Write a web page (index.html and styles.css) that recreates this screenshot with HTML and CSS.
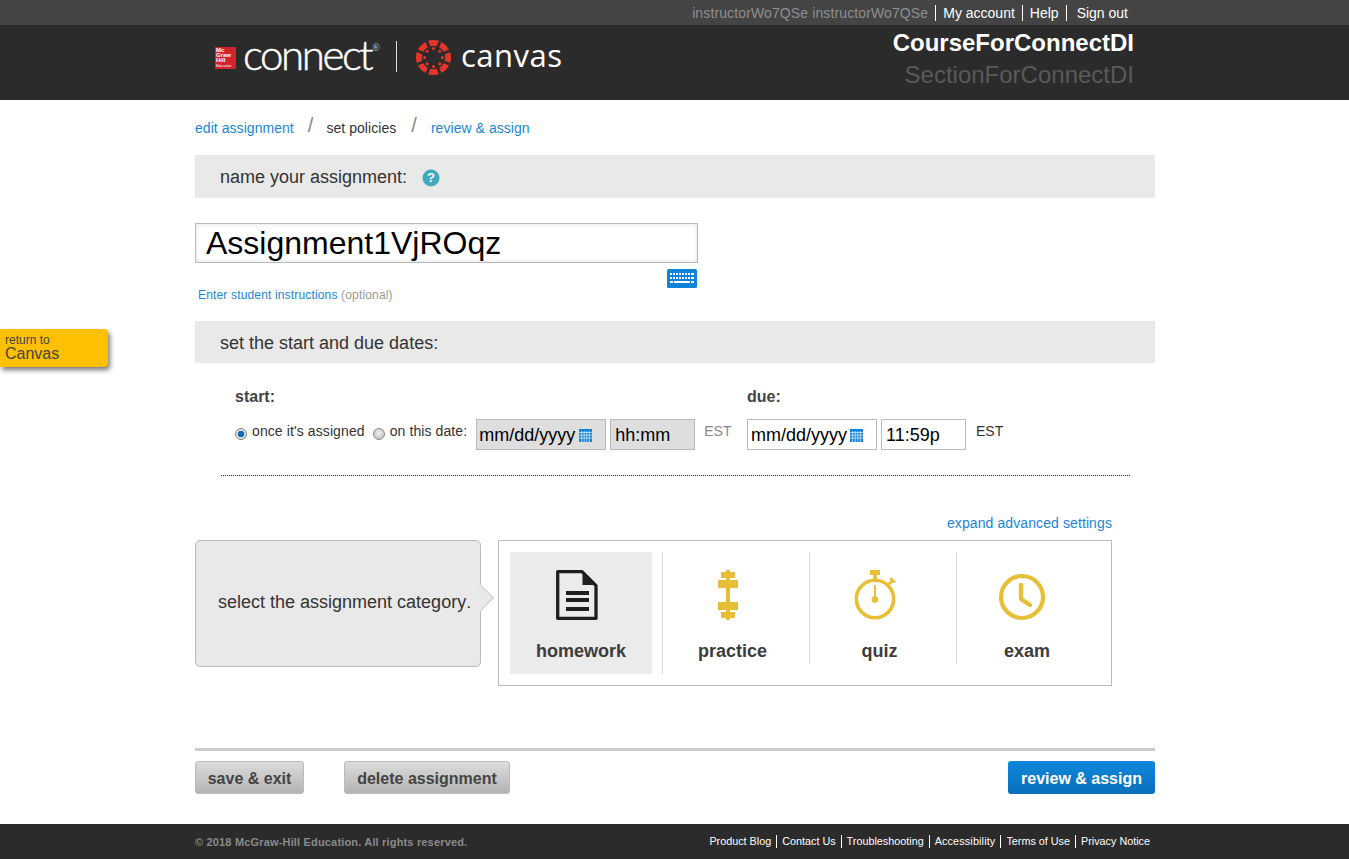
FILE: index.html
```html
<!DOCTYPE html>
<html lang="en">
<head>
<meta charset="utf-8">
<title>Set policies</title>
<link rel="stylesheet" href="styles.css">
</head>
<body>
<header class="masthead">
  <div class="topbar">
    <div class="wrap topbar-inner">
      <span class="user">instructorWo7QSe instructorWo7QSe</span>
      <a class="toplink" href="#">My account</a>
      <a class="toplink" href="#">Help</a>
      <a class="toplink last" href="#">Sign out</a>
    </div>
  </div>
  <div class="brandbar">
    <div class="wrap brand-inner">
      <div class="logos">
        <div class="mh"><span>Mc</span><span>Graw</span><span>Hill</span><span class="mh-ed">Education</span></div>
        <span class="connect">connect<sup>®</sup></span>
        <span class="logo-div"></span>
        <svg class="canvas-mark" viewBox="0 0 36 36" width="35" height="35" aria-hidden="true">
          <g fill="#e5352b">
            <path d="M12.44 .88A18 18 0 0 1 23.56 .88L21.3 6.46A12 12 0 0 0 14.7 6.46z"/>
            <path d="M12.44 .88A18 18 0 0 1 23.56 .88L21.3 6.46A12 12 0 0 0 14.7 6.46z" transform="rotate(45 18 18)"/>
            <path d="M12.44 .88A18 18 0 0 1 23.56 .88L21.3 6.46A12 12 0 0 0 14.7 6.46z" transform="rotate(90 18 18)"/>
            <path d="M12.44 .88A18 18 0 0 1 23.56 .88L21.3 6.46A12 12 0 0 0 14.7 6.46z" transform="rotate(135 18 18)"/>
            <path d="M12.44 .88A18 18 0 0 1 23.56 .88L21.3 6.46A12 12 0 0 0 14.7 6.46z" transform="rotate(180 18 18)"/>
            <path d="M12.44 .88A18 18 0 0 1 23.56 .88L21.3 6.46A12 12 0 0 0 14.7 6.46z" transform="rotate(225 18 18)"/>
            <path d="M12.44 .88A18 18 0 0 1 23.56 .88L21.3 6.46A12 12 0 0 0 14.7 6.46z" transform="rotate(270 18 18)"/>
            <path d="M12.44 .88A18 18 0 0 1 23.56 .88L21.3 6.46A12 12 0 0 0 14.7 6.46z" transform="rotate(315 18 18)"/>
            <circle cx="18" cy="8.800" r="1.600"/><circle cx="24.500" cy="11.500" r="1.600"/><circle cx="27.200" cy="18" r="1.600"/><circle cx="24.500" cy="24.500" r="1.600"/>
            <circle cx="18" cy="27.200" r="1.600"/><circle cx="11.500" cy="24.500" r="1.600"/><circle cx="8.800" cy="18" r="1.600"/><circle cx="11.500" cy="11.500" r="1.600"/>
          </g>
        </svg>
        <span class="canvas-word">canvas</span>
      </div>
      <div class="course">
        <div class="course-name">CourseForConnectDI</div>
        <div class="section-name">SectionForConnectDI</div>
      </div>
    </div>
  </div>
</header>

<a class="return-tab" href="#"><small>return to</small>Canvas</a>

<main class="wrap main">
  <nav class="crumbs">
    <a href="#">edit assignment</a><i>/</i><span>set policies</span><i>/</i><a href="#">review &amp; assign</a>
  </nav>

  <h2 class="bar bar-name">name your assignment:
    <svg class="help" viewBox="0 0 18 18" width="18" height="18" aria-hidden="true"><circle cx="9" cy="9" r="8.500" fill="#43a9bd"/></svg>
    <span class="help-q">?</span>
  </h2>

  <input class="name-input" type="text" value="Assignment1VjROqz" aria-label="Assignment name">
  <div class="kb-row">
    <svg width="30" height="19" viewBox="0 0 30 19" aria-hidden="true">
      <rect width="30" height="19" rx="1.500" fill="#0f83d8"/>
      <g fill="#fff">
        <path d="M3 4h2v2H3zM6 4h2v2H6zM9 4h2v2H9zM12 4h2v2h-2zM15 4h2v2h-2zM18 4h2v2h-2zM21 4h2v2h-2zM24 4h3v2h-3z"/>
        <path d="M3 8h2v2H3zM6 8h2v2H6zM9 8h2v2H9zM12 8h2v2h-2zM15 8h2v2h-2zM18 8h2v2h-2zM21 8h2v2h-2zM24 8h3v2h-3z"/>
        <path d="M3 12h3v2H3zM7 12h16v2H7zM24 12h3v2h-3z"/>
      </g>
    </svg>
  </div>
  <p class="instr"><a href="#">Enter student instructions</a> <span>(optional)</span></p>

  <h2 class="bar bar-dates">set the start and due dates:</h2>

  <section class="dates">
    <div class="date-group start">
      <h3>start:</h3>
      <div class="date-row">
        <label class="radio"><span class="dot on"></span>once it's assigned</label>
        <label class="radio second"><span class="dot"></span>on this date:</label>
        <div class="field date off">mm/dd/yyyy<svg class="cal" viewBox="0 0 13 13" width="13" height="13" aria-hidden="true"><use href="#calendar"/></svg></div>
        <div class="field time off">hh:mm</div>
        <span class="tz off-tz">EST</span>
      </div>
    </div>
    <div class="date-group">
      <h3>due:</h3>
      <div class="date-row">
        <div class="field date">mm/dd/yyyy<svg class="cal" viewBox="0 0 13 13" width="13" height="13" aria-hidden="true"><use href="#calendar"/></svg></div>
        <div class="field time">11:59p</div>
        <span class="tz">EST</span>
      </div>
    </div>
  </section>
  <svg class="defs" width="0" height="0" aria-hidden="true">
    <defs>
      <g id="calendar">
        <rect width="13" height="13" fill="#0f83d8"/>
        <path stroke="#cfe6f8" stroke-width=".8" d="M0 3.500h13M0 6.200h13M0 9h13M2.600 2v11M5.200 2v11M7.800 2v11M10.400 2v11"/>
      </g>
    </defs>
  </svg>

  <div class="adv"><a href="#">expand advanced settings</a></div>

  <section class="category">
    <div class="cat-label">select the assignment category:</div>
    <div class="cat-options">
      <div class="cat-opt selected">
        <svg width="44" height="50" viewBox="0 0 44 50" aria-hidden="true">
          <path d="M2.700 1.700h24.300l14 14v32.600H2.700z" fill="none" stroke="#1f1d1e" stroke-width="3.300" stroke-linejoin="round"/>
          <path d="M27.500 1v14h14z" fill="#1f1d1e"/>
          <path d="M11 21h23v4H11zM11 28h23v4H11zM11 37h23v4H11z" fill="#1f1d1e"/>
        </svg>
        <b>homework</b>
      </div>
      <div class="cat-opt">
        <svg width="44" height="50" viewBox="0 0 44 50" aria-hidden="true">
          <path fill="#e6bf36" d="M20 0h4v2h5v6h-5v2h8v8h-8v14h8v8h-8v2h5v6h-5v2h-4v-2h-5v-6h5v-2h-8v-8h8V18h-8v-8h8V8h-5V2h5z"/>
        </svg>
        <b>practice</b>
      </div>
      <div class="cat-opt">
        <svg width="44" height="50" viewBox="0 0 44 50" aria-hidden="true">
          <g fill="#e6bf36">
            <path d="M17 0h10v5h-3.200v4h-3.600V5H17z"/>
            <circle cx="22" cy="29.500" r="3.300"/>
            <rect x="21" y="15" width="2" height="14"/>
          </g>
          <path d="M35.500 14.500l3.500-3.500M37.300 8l4.700 4.700" fill="none" stroke="#e6bf36" stroke-width="2.600"/>
          <circle cx="22" cy="29" r="18.700" fill="none" stroke="#e6bf36" stroke-width="3.600"/>
        </svg>
        <b>quiz</b>
      </div>
      <div class="cat-opt last">
        <svg width="48" height="50" viewBox="0 0 48 50" aria-hidden="true">
          <circle cx="24" cy="27" r="21" fill="none" stroke="#e6bf36" stroke-width="4.200"/>
          <path d="M23 15v14l9 6" fill="none" stroke="#e6bf36" stroke-width="4.400" stroke-linecap="round" stroke-linejoin="round"/>
        </svg>
        <b>exam</b>
      </div>
    </div>
  </section>

  <div class="actions">
    <a class="btn grey" href="#">save &amp; exit</a>
    <a class="btn grey del" href="#">delete assignment</a>
    <a class="btn blue" href="#">review &amp; assign</a>
  </div>
</main>

<footer class="foot">
  <div class="wrap foot-inner">
    <span class="copy">© 2018 McGraw-Hill Education. All rights reserved.</span>
    <nav class="foot-links">
      <a href="#">Product Blog</a><a href="#">Contact Us</a><a href="#">Troubleshooting</a><a href="#">Accessibility</a><a href="#">Terms of Use</a><a href="#">Privacy Notice</a>
    </nav>
  </div>
</footer>
</body>
</html>
```
FILE: styles.css
```css
* { box-sizing: border-box; }
html, body { margin: 0; padding: 0; }
body {
  font-family: "Liberation Sans", Arial, sans-serif;
  color: #333;
  background: #fff;
  position: relative;
  height: 859px;
  overflow: hidden;
}
a { text-decoration: none; color: inherit; }
.wrap { width: 960px; margin-left: 195px; }

.topbar { height: 25px; background: #444; }
.topbar-inner {
  height: 25px;
  display: flex;
  justify-content: flex-end;
  align-items: center;
  padding-right: 27px;
  font-size: 14px;
  color: #fff;
}
.user { color: #8f8f8f; padding-right: 7px; border-right: 1px solid #fff; line-height: 16px; letter-spacing: .12px; }
.toplink { padding: 0 7px; border-right: 1px solid #fff; line-height: 16px; }
.toplink.last { border-right: 0; padding: 0 0 0 10px; }

.brandbar { height: 75px; background: #2b2b2b; }
.brand-inner { height: 75px; display: flex; justify-content: space-between; }
.logos { display: flex; align-items: flex-start; padding: 15px 0 0 20px; }
.mh {
  width: 21px;
  height: 22px;
  margin-top: 7px;
  background: #d2232a;
  color: #fff;
  font-size: 6px;
  font-weight: 700;
  line-height: 5.200px;
  padding: 1px 0 0 1px;
  display: flex;
  flex-direction: column;
  overflow: hidden;
}
.mh-ed { font-size: 3.500px; font-weight: 400; line-height: 4px; }
.connect {
  font-family: "Lato", sans-serif;
  font-weight: 300;
  font-size: 42px;
  line-height: 30px;
  color: #fff;
  -webkit-text-stroke: .5px #fff;
  letter-spacing: -2.400px;
  margin: -1px 0 0 7px;
  width: 135px;
  white-space: nowrap;
}
.connect sup { font-size: 9px; vertical-align: 19px; line-height: 0; letter-spacing: 0; margin-left: 1px; -webkit-text-stroke: 0; }
.logo-div { width: 1px; height: 31px; background: #ddd; margin: 1px 0 0 18px; }
.canvas-mark { margin: 0 0 0 19px; }
.canvas-word {
  font-family: "Open Sans", sans-serif;
  font-weight: 500;
  font-size: 31px;
  line-height: 31px;
  color: #fff;
  letter-spacing: .5px;
  margin: 0 0 0 10px;
}
.course { padding-right: 21px; text-align: right; font-size: 24px; line-height: 27px; padding-top: 4px; }
.course-name { font-weight: 700; color: #fff; }
.section-name { color: #5a5a5a; margin-top: 5px; }

.return-tab {
  position: absolute;
  left: 0;
  top: 329px;
  width: 108px;
  height: 38px;
  background: #ffc000;
  border-radius: 0 4px 4px 0;
  box-shadow: 2px 3px 5px #777;
  padding: 5px 0 0 5px;
  font-size: 16px;
  line-height: 16px;
  color: #444;
}
.return-tab small { display: block; font-size: 12px; line-height: 12px; }

.main { height: 724px; }
.crumbs { height: 55px; padding-top: 20px; display: flex; align-items: flex-start; font-size: 14px; line-height: 16px; color: #333; letter-spacing: .05px; }
.crumbs a { color: #1a85d6; }
.crumbs span { margin-right: 1px; }
.crumbs i { font-style: normal; font-size: 20px; line-height: 16px; color: #888; margin: 0 14px; position: relative; top: -3px; }
.crumbs i:first-of-type { margin-right: 13px; }

.bar {
  margin: 0;
  background: #e9e9e9;
  padding: 2px 0 0 25px;
  font-weight: 400;
  font-size: 18px;
  color: #333;
  display: flex;
  align-items: center;
}
.bar-name { height: 43px; position: relative; }
.bar-dates { height: 42px; margin-top: 19px; }
.help { margin-left: 15px; }
.help-q { margin-left: -18px; width: 18px; text-align: center; color: #fff; font-weight: 700; font-size: 13px; }

.name-input {
  display: block;
  width: 503px;
  height: 40px;
  margin-top: 25px;
  border: 1px solid #bbb;
  padding: 0 10px;
  font: 32px "Liberation Sans", Arial, sans-serif;
  color: #000;
  box-shadow: inset 0 0 4px #ddd;
  outline: 0;
  background: #fff;
}
.kb-row { width: 502px; height: 19px; margin-top: 6px; display: flex; justify-content: flex-end; }
.instr { margin: 0; padding-left: 3px; font-size: 12px; line-height: 14px; letter-spacing: .16px; }
.instr a { color: #1a85d6; }
.instr span { color: #999; }

.dates {
  margin: 0 25px 0 26px;
  height: 113px;
  padding: 24px 0 0 14px;
  display: flex;
  border-bottom: 1px dotted #333;
}
.date-group.start { width: 512px; flex: none; }
.date-group h3 { margin: 0 0 12px; font-size: 16px; line-height: 20px; font-weight: 700; color: #444; }
.date-row { display: flex; align-items: flex-start; }
.radio { display: flex; align-items: center; font-size: 14px; line-height: 18px; color: #333; padding-top: 3px; letter-spacing: .1px; }
.radio.second { margin-left: 8px; margin-right: 9px; }
.dot {
  width: 12px;
  height: 12px;
  border-radius: 50%;
  border: 1px solid #888;
  background: radial-gradient(circle at 50% 40%, #eee, #bbb);
  margin-right: 5px;
  margin-top: 5px;
  flex: none;
}
.dot.on { background: radial-gradient(circle, #0b6db4 0 3px, #dcdcdc 3.500px); }
.field {
  height: 31px;
  border: 1px solid #bbb;
  font-size: 18px;
  line-height: 30px;
  color: #000;
  padding-left: 3px;
  white-space: nowrap;
  display: flex;
  align-items: center;
}
.field.date { width: 130px; }
.field.time { width: 85px; margin-left: 4px; padding-left: 4px; }
.field.off { background: #dedede; }
.field.date.off { padding-left: 2px; }
.cal { margin-left: 3px; margin-top: 1px; }
.field.date.off .cal { margin-left: 4px; }
.tz { font-size: 14px; line-height: 18px; margin-left: 10px; padding-top: 3px; color: #333; }
.tz.off-tz { color: #888; margin-left: 9px; }
.defs { position: absolute; }

.adv { width: 917px; height: 64px; padding-top: 39px; text-align: right; font-size: 14px; line-height: 16px; color: #1a85d6; letter-spacing: .1px; }

.category { display: flex; align-items: flex-start; }
.cat-label {
  position: relative;
  width: 286px;
  height: 127px;
  background: #e9e9e9;
  border: 1px solid #bbb;
  border-radius: 5px;
  padding: 51px 0 0 22px;
  font-size: 18px;
  line-height: 20px;
  color: #333;
  white-space: nowrap;
}
.cat-label::after {
  content: "";
  position: absolute;
  right: -11px;
  top: 46px;
  width: 21px;
  height: 21px;
  background: #e9e9e9;
  border-top: 1px solid #ccc;
  border-right: 1px solid #ccc;
  transform: rotate(45deg) scale(.9);
}
.cat-options {
  width: 614px;
  height: 146px;
  margin-left: 17px;
  border: 1px solid #bbb;
  padding: 11px 0 0 11px;
  display: flex;
  align-items: flex-start;
}
.cat-opt {
  width: 147px;
  height: 112px;
  border-right: 1px solid #d8d8d8;
  display: flex;
  flex-direction: column;
  align-items: center;
  padding: 18px 7px 0 0;
}
.cat-opt svg { display: block; flex: none; margin-right: 9px; overflow: visible; }
.cat-opt b { margin-top: 20px; font-size: 18px; line-height: 22px; color: #3c3c3c; }
.cat-opt.selected { width: 142px; height: 122px; background: #ebebeb; border-right: 0; position: relative; margin-right: 11px; padding-right: 0; }
.cat-opt.selected::after { content: ""; position: absolute; right: -11px; top: 0; width: 1px; height: 122px; background: #d8d8d8; }
.cat-opt.last { border-right: 0; }
.cat-opt.last svg { margin-right: 11px; }

.actions {
  margin-top: 62px;
  border-top: 3px solid #ccc;
  padding-top: 10px;
  display: flex;
}
.btn {
  height: 33px;
  font-size: 16px;
  font-weight: 700;
  border-radius: 3px;
  text-align: center;
}
.btn.grey { background: linear-gradient(#dcdcdc, #b4b4b4); border: 1px solid #bbb; color: #444; width: 109px; line-height: 33px; }
.btn.del { width: 166px; margin-left: 40px; }
.btn.blue { background: linear-gradient(#0f87dc, #0a6fbb); color: #fff; width: 147px; margin-left: auto; line-height: 35px; }

.foot { position: absolute; left: 0; right: 0; top: 824px; height: 35px; background: #2b2b2b; }
.foot-inner { height: 35px; display: flex; align-items: center; justify-content: space-between; padding-right: 5px; }
.copy { font-size: 11px; font-weight: 700; color: #8a8a8a; letter-spacing: .17px; }
.foot-links { display: flex; font-size: 10.800px; color: #fff; line-height: 13px; }
.foot-links a { padding: 0 5px; border-right: 1px solid #fff; }
.foot-links a:nth-child(4) { letter-spacing: .15px; }
.foot-links a:last-child { border-right: 0; padding-right: 0; }
```
